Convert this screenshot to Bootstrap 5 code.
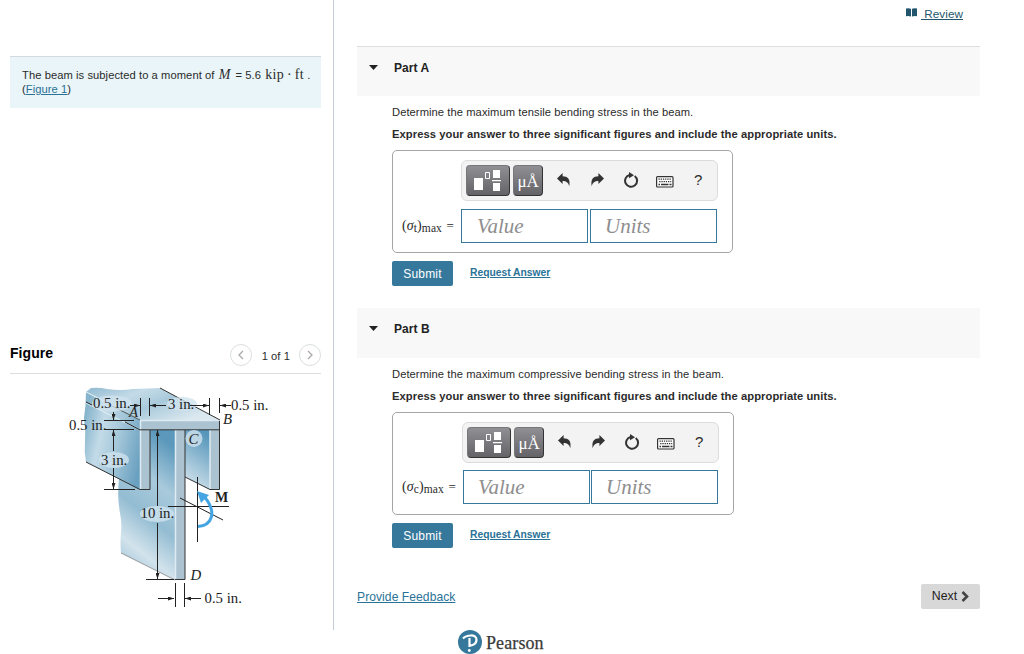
<!DOCTYPE html>
<html lang="en">
<head>
    <meta charset="UTF-8">
    <meta name="viewport" content="width=device-width, initial-scale=1.0">
    <title>Bending stress - Review</title>
    <link href="https://cdn.jsdelivr.net/npm/bootstrap@5.3.0/dist/css/bootstrap.min.css" rel="stylesheet">
    <style>
        body { font-family: "Liberation Sans", Arial, sans-serif; font-size: 11.2px; line-height: 14px; letter-spacing: .06px; color: #2b2b2b; height: 654px; overflow: hidden; white-space: nowrap; }
        a { color: #2a7297; }
        .serif { font-family: "Liberation Serif", "Times New Roman", serif; }

        /* left side */
        .side-pane { width: 334px; height: 630px; border-right: 1px solid #c3ccd5; padding: 56px 12px 0 10px; }
        .problem { height: 52px; background: #e9f5f8; border-top: 1px solid #d5dbdc; padding: 11px 0 0 12px; }
        .problem .serif { font-size: 14px; line-height: 12px; margin-left: 1px; }
        .problem .var { margin-right: 2px; }
        .problem .unit { letter-spacing: .35px; word-spacing: -1px; }
        .figure-head { height: 34px; margin-top: 232px; border-bottom: 1px solid #dcdfdf; }
        .figure-head h2 { font-size: 14px; line-height: 18px; color: #000; margin-top: 4px; }
        .round-btn { width: 22px; height: 22px; border: 1px solid #dcdfe0; background: #fff; }
        .counter { margin: 9px 9px 0 10px; }
        .beam { margin: 6px 0 0 50px; letter-spacing: 0; }

        /* right side */
        .main-pane { width: 623px; margin-left: 23px; }
        .review-bar { height: 46px; padding: 5px 17px 0 0; }
        .review-bar a { color: #22566d; font-size: 11.700px; line-height: 17px; }
        .part-head { height: 50px; background: #f8f8f8; padding: 0 0 8px 12px; }
        .part-head.first { border-top: 1px solid #dedede; }
        .part-head h3 { font-size: 12px; line-height: 14px; color: #222; }
        .part-body { padding: 9px 0 0 35px; height: 212px; }
        .part-body p { margin: 0 0 8px; }
        .part-body p.instr { margin-bottom: 9px; letter-spacing: .07px; }
        .answer-box { width: 341px; height: 103px; border: 1px solid #a6a6a6; border-radius: 5px; padding: 9px 15px 0 9px; }
        .tool-bar { width: 257px; height: 41px; background: #f3f3f3; border: 1px solid #dcdcdc; border-radius: 6px; margin-left: 59px; padding: 0 0 1px 4px; }
        .tool-btn { height: 31px; border: 1px solid #333; border-top-color: #77777a; border-left-color: #77777a; border-radius: 4px; background: linear-gradient(#8f8f94, #646468); color: #fff; }
        .btn-tpl { width: 44px; margin-right: 3px; }
        .btn-unit { width: 30px; font-size: 17px; line-height: 32px; letter-spacing: -.3px; }
        .tool-icons { margin-left: 14px; }
        .tool-icons svg:nth-child(-n+2) { margin-right: 19px; }
        .tool-icons svg:nth-child(3) { margin-right: 17px; }
        .tool-icons svg:nth-child(4) { margin: 3px 20px 0 0; }
        .flip { transform: scaleX(-1); }
        .help { font-size: 15px; }
        .answer-row { margin-top: 8px; }
        .answer-label { width: 59px; font-size: 14px; line-height: 20px; letter-spacing: .1px; }
        .answer-label sub { font-size: 11.500px; bottom: -2px; }
        .answer-label .eq { font-size: 13px; margin-left: 1px; }
        .answer-row input { width: 127px; height: 34px; border: 1px solid #35789b; border-radius: 0; padding: 0 0 0 15px; font: italic 21px/30px "Liberation Serif", serif; color: #333; }
        .answer-row input + input { padding-left: 14px; }
        .answer-row input::placeholder { color: #8e8e8e; opacity: 1; }
        .second .answer-box { width: 342px; }
        .second .tool-bar { margin-left: 60px; }
        .second .answer-label { width: 61px; }
        .second .answer-row { margin-top: 7px; }
        .second .answer-row input { padding-left: 14px; }
        .submit-row { margin-top: 8px; }
        .submit-btn { width: 61px; height: 25px; background: #35789b; color: #fff; font-size: 12px; line-height: 14px; letter-spacing: .2px; border-radius: 2px; }
        .submit-btn:hover { background: #2a6482; color: #fff; }
        .req { margin: -1px 0 0 17px; font-size: 10.300px; letter-spacing: 0; }
        .end-row { height: 25px; margin-top: 14px; }
        .next-btn { width: 59px; height: 25px; background: #d8d8d8; color: #222; font-size: 12.300px; padding-bottom: 1px !important; border-radius: 2px; }
        .foot-link { font-size: 12.100px; }
        .brand { margin: 21px 0 0 101px; }
        .brand-text { font-size: 18px; line-height: 27px; color: #3a3a3a; letter-spacing: .1px; -webkit-text-stroke: .25px #3a3a3a; }
    </style>
</head>
<body>
    <svg class="d-none">
        <symbol id="ico-templates" viewBox="0 0 30 24">
            <path fill="#fff" d="M1 10h9v12H1zM20 2h7v8h-7zM20 15h7v8h-7zM19 12h9v1.300h-9z"/>
            <path fill="none" stroke="#fff" d="M12.500 4.500h4v6h-4z"/>
        </symbol>
        <symbol id="ico-undo" viewBox="0 0 14 14">
            <path fill="#333" d="M0 5.500 5.600 0v3.300C10.600 3.300 13.500 6 12.300 13.200 11.300 9.400 9.300 8 5.600 8v3z"/>
        </symbol>
        <symbol id="ico-reset" viewBox="0 0 16 16">
            <path fill="none" stroke="#333" stroke-width="2" d="M11.700 4A6 6 0 1 1 6.500 3"/>
            <path fill="#333" d="M6 0l5 3.300-5 3z"/>
        </symbol>
        <symbol id="ico-keys" viewBox="0 0 18 12">
            <rect x=".6" y=".6" width="16.400" height="10.400" rx="1" fill="#fff" stroke="#333" stroke-width="1.200"/>
            <path stroke="#333" stroke-width="1.300" stroke-dasharray="1.300 .9" d="M2.500 3.200h13M3.200 5.600h12"/>
            <path stroke="#333" stroke-width="1.300" d="M2.500 8.500h1.500M5 8.500h7.500M13.500 8.500h2"/>
        </symbol>
    </svg>

    <div class="d-flex">
        <!-- Problem statement and figure -->
        <div class="side-pane flex-shrink-0">
            <div class="problem me-n1">
                The beam is subjected to a moment of <span class="serif var"><i>M</i></span> = 5.6 <span class="serif unit">kip · ft</span> .<br>
                (<a href="#">Figure 1</a>)
            </div>
            <div class="figure-head d-flex justify-content-between">
                <h2 class="fw-bold mb-0">Figure</h2>
                <div class="d-flex align-items-start">
                    <button class="round-btn rounded-circle p-0 d-flex align-items-center justify-content-center mt-1">
                        <svg width="8" height="10" fill="none" stroke="#aaa" stroke-width="1.300"><path d="M6 1 2 5l4 4"/></svg>
                    </button>
                    <span class="counter">1 of 1</span>
                    <button class="round-btn rounded-circle p-0 d-flex align-items-center justify-content-center mt-1">
                        <svg width="8" height="10" fill="none" stroke="#aaa" stroke-width="1.300"><path d="M2 1l4 4-4 4"/></svg>
                    </button>
                </div>
            </div>
            <svg class="beam d-block serif" width="220" height="235" viewBox="60 380 220 235" font-size="14.800" fill="#222">
                <defs>
                    <linearGradient id="gTop" x1="0" y1="0" x2="1" y2=".6">
                        <stop offset="0" stop-color="#8fb9d1"/><stop offset=".35" stop-color="#c4dbe7"/><stop offset=".6" stop-color="#a9cadb"/><stop offset="1" stop-color="#dbe8ef"/>
                    </linearGradient>
                    <linearGradient id="gSide" x1="0" y1=".3" x2="1" y2=".7">
                        <stop offset="0" stop-color="#86b4cc"/><stop offset=".3" stop-color="#c3dbe8"/><stop offset=".6" stop-color="#a3c6d9"/><stop offset="1" stop-color="#6ba1c0"/>
                    </linearGradient>
                    <linearGradient id="gWeb" x1=".6" y1="0" x2=".3" y2="1">
                        <stop offset="0" stop-color="#5b98bb"/><stop offset=".3" stop-color="#a9cadc"/><stop offset=".55" stop-color="#93bcd2"/><stop offset=".8" stop-color="#d2e3ec"/><stop offset="1" stop-color="#9fc3d7"/>
                    </linearGradient>
                    <linearGradient id="gIn" x1=".6" y1="0" x2=".3" y2="1">
                        <stop offset="0" stop-color="#5796ba"/><stop offset="1" stop-color="#d5e5ee"/>
                    </linearGradient>
                    <marker id="arr" viewBox="0 0 6 4" refX="6" refY="2" markerWidth="6" markerHeight="4" markerUnits="userSpaceOnUse" orient="auto"><path fill="#222" d="M0 0l6 2-6 2z"/></marker>
                </defs>

                <!-- solid -->
                <path fill="url(#gWeb)" d="M150 430h25v150l-54-27q-1-12 0-20 1-10-1-20-3-15-1-35z"/>
                <path fill="url(#gSide)" d="M86 392l54 28v70l-54-28q-2-10-1-20 1-12-1-24 2-14 2-26z"/>
                <path fill="url(#gTop)" d="M86 392l5-4q8-1 16 1 14 2 26 0l27-1 60 32h-80z"/>
                <path stroke="#e4f0f6" fill="none" d="M86 403l54 27"/>
                <path fill="url(#gIn)" d="M185 430h25v60l-25-13z"/>
                <path fill="#abc2d0" d="M140 420h80v70h-10v-60h-25v150h-10V430h-25v60h-10z"/>
                <path fill="none" stroke="#deebf2" stroke-width="1.500" d="M220 420.500h-79.500V490M175.500 430v149M210 430v59"/>
                <path fill="none" stroke="#333" d="M160 388l60 32M140 429.800h79.500M86 462l54 27.500h10V430M219.500 421v68.500h-9.500L185 477M185 430v149.500h-10"/>
                <path fill="none" stroke="#333" stroke-width=".8" d="M108 404l32 16"/>
                <path fill="none" stroke="#e4f0f6" d="M86 392l20 10"/>
                <path fill="none" stroke="#777" stroke-width=".7" d="M121 553l54 27"/>

                <!-- label backdrops -->
                <g fill="#cfe2ed" fill-opacity=".8">
                    <ellipse cx="112" cy="403.500" rx="20" ry="8"/><ellipse cx="114" cy="460" rx="15" ry="8"/>
                    <ellipse cx="182" cy="404" rx="15" ry="7"/><circle cx="194" cy="438.500" r="8.500"/><ellipse cx="157" cy="514" rx="17" ry="8"/>
                </g>

                <!-- dimensions -->
                <g fill="none" stroke="#222">
                    <path d="M140.500 398v18M149.500 398v18M209.500 398v17M219.500 398v15M104 420.500h30M104 429.500h30M125 422l15 8M104 489.500h31M146 579.500h28M175.500 583v24M184.500 583v24"/>
                    <path d="M86 402l6 3M168 506.500h61M180 498l43 22M197.500 477v65"/>
                    <g marker-end="url(#arr)">
                        <path d="M130 405.500h10"/>
                        <path d="M166 405.500h-16"/>
                        <path d="M190 405.500h19"/>
                        <path d="M231 405.500h-11"/>
                        <path d="M113.500 412v8"/>
                        <path d="M113.500 451v-21"/>
                        <path d="M113.500 468v21"/>
                        <path d="M157.500 506v-76"/>
                        <path d="M157.500 523v56"/>
                        <path d="M158 598.500h16"/>
                        <path d="M201 598.500h-16"/>
                    </g>
                </g>

                <!-- moment M -->
                <path fill="none" stroke="#45a5e2" stroke-width="3" d="M198 526.500c14-1 19-14 7-29"/>
                <path fill="#45a5e2" d="M197 491l12 4-8 8z"/>

                <text x="93" y="407.500">0.5 in.</text><text x="69" y="429.500">0.5 in.</text>
                <text x="168" y="409">3 in.</text><text x="231" y="410">0.5 in.</text>
                <text x="101" y="464.500">3 in.</text><text x="140.500" y="518">10 in.</text><text x="204.500" y="603">0.5 in.</text>
                <g font-style="italic"><text x="129" y="416.500">A</text><text x="223" y="424">B</text><text x="188.500" y="443.500">C</text><text x="190.500" y="579.500">D</text></g>
                <text x="215" y="501.500" font-weight="bold" font-size="14">M</text>
            </svg>
        </div>

        <!-- Questions -->
        <div class="main-pane">
            <div class="review-bar d-flex justify-content-end">
                <svg class="me-1" width="11" height="12"><path fill="#22566d" d="M0 3.500q3-.5 5 .300V11.500Q3 10.800 0 11.200zM11 3.500q-3-.5-5 .300V11.500Q8 10.800 11 11.200z"/></svg>
                <a href="#">&nbsp;Review</a>
            </div>

            <div class="part-head first d-flex align-items-center">
                <svg width="25" height="6"><path fill="#222" d="M0 0h9L4.500 5z"/></svg>
                <h3 class="fw-bold mb-0">Part A</h3>
            </div>
            <div class="part-body">
                <p>Determine the maximum tensile bending stress in the beam.</p>
                <p class="instr fw-bold">Express your answer to three significant figures and include the appropriate units.</p>
                <div class="answer-box">
                    <div class="tool-bar d-flex align-items-center">
                        <button class="tool-btn btn-tpl p-0 d-flex align-items-center justify-content-center"><svg width="30" height="24"><use href="#ico-templates"/></svg></button>
                        <button class="tool-btn btn-unit serif p-0">μÅ</button>
                        <div class="tool-icons d-flex align-items-center">
                            <svg width="14" height="14"><use href="#ico-undo"/></svg>
                            <svg class="flip" width="14" height="14"><use href="#ico-undo"/></svg>
                            <svg width="16" height="16"><use href="#ico-reset"/></svg>
                            <svg width="18" height="12"><use href="#ico-keys"/></svg>
                            <span class="help">?</span>
                        </div>
                    </div>
                    <div class="answer-row d-flex align-items-center">
                        <div class="answer-label serif">(<i>σ</i><sub>t</sub>)<sub>max</sub> <span class="eq">=</span></div>
                        <input type="text" placeholder="Value">
                        <input type="text" class="ms-auto" placeholder="Units">
                    </div>
                </div>
                <div class="d-flex align-items-center submit-row">
                    <button class="btn submit-btn p-0">Submit</button>
                    <a class="fw-bold req" href="#">Request Answer</a>
                </div>
            </div>

            <div class="part-head d-flex align-items-center">
                <svg width="25" height="6"><path fill="#222" d="M0 0h9L4.500 5z"/></svg>
                <h3 class="fw-bold mb-0">Part B</h3>
            </div>
            <div class="part-body second">
                <p>Determine the maximum compressive bending stress in the beam.</p>
                <p class="instr fw-bold">Express your answer to three significant figures and include the appropriate units.</p>
                <div class="answer-box">
                    <div class="tool-bar d-flex align-items-center">
                        <button class="tool-btn btn-tpl p-0 d-flex align-items-center justify-content-center"><svg width="30" height="24"><use href="#ico-templates"/></svg></button>
                        <button class="tool-btn btn-unit serif p-0">μÅ</button>
                        <div class="tool-icons d-flex align-items-center">
                            <svg width="14" height="14"><use href="#ico-undo"/></svg>
                            <svg class="flip" width="14" height="14"><use href="#ico-undo"/></svg>
                            <svg width="16" height="16"><use href="#ico-reset"/></svg>
                            <svg width="18" height="12"><use href="#ico-keys"/></svg>
                            <span class="help">?</span>
                        </div>
                    </div>
                    <div class="answer-row d-flex align-items-center">
                        <div class="answer-label serif">(<i>σ</i><sub>c</sub>)<sub>max</sub> <span class="eq">=</span></div>
                        <input type="text" placeholder="Value">
                        <input type="text" class="ms-auto" placeholder="Units">
                    </div>
                </div>
                <div class="d-flex align-items-center submit-row">
                    <button class="btn submit-btn p-0">Submit</button>
                    <a class="fw-bold req" href="#">Request Answer</a>
                </div>
            </div>

            <div class="end-row d-flex justify-content-between align-items-center">
                <a class="foot-link" href="#">Provide Feedback</a>
                <button class="btn next-btn p-0 d-flex align-items-center justify-content-center">Next
                    <svg class="ms-1" width="8" height="11" fill="none" stroke="#444" stroke-width="2.600"><path d="M1.500 1l4.500 4.500L1.500 10"/></svg>
                </button>
            </div>
            <div class="brand d-flex align-items-start">
                <svg width="24" height="24" viewBox="0 0 24 24"><circle cx="12" cy="12" r="12" fill="#35789b"/><path fill="none" stroke="#fff" stroke-width="2.200" d="M5 8.500c3-3.500 13.500-5 13.500 1.300 0 4.200-4 6-8 5.700M11.500 8v9"/><circle cx="11.300" cy="20.500" r="1.400" fill="#fff"/></svg>
                <span class="brand-text serif ms-1">Pearson</span>
            </div>
        </div>
    </div>

    <script src="https://cdn.jsdelivr.net/npm/bootstrap@5.3.0/dist/js/bootstrap.bundle.min.js"></script>
</body>
</html>
